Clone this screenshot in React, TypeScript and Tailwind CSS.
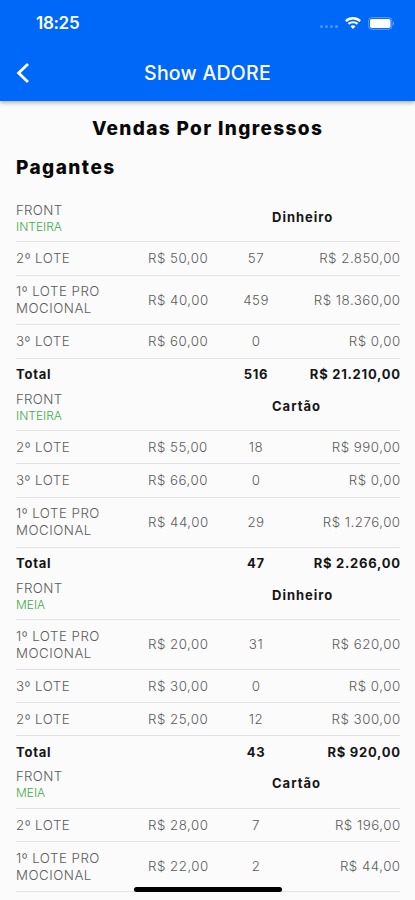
type Row = { lines: string[]; price: string; qty: string; amount: string };
type Section = {
  kind: string;
  method: string;
  rows: Row[];
  total?: { qty: string; amount: string };
};

const promo = ['1º LOTE PRO', 'MOCIONAL'];
const second = ['2º LOTE'];
const third = ['3º LOTE'];

const sections: Section[] = [
  {
    kind: 'INTEIRA',
    method: 'Dinheiro',
    rows: [
      { lines: second, price: 'R$ 50,00', qty: '57', amount: 'R$ 2.850,00' },
      { lines: promo, price: 'R$ 40,00', qty: '459', amount: 'R$ 18.360,00' },
      { lines: third, price: 'R$ 60,00', qty: '0', amount: 'R$ 0,00' },
    ],
    total: { qty: '516', amount: 'R$ 21.210,00' },
  },
  {
    kind: 'INTEIRA',
    method: 'Cartão',
    rows: [
      { lines: second, price: 'R$ 55,00', qty: '18', amount: 'R$ 990,00' },
      { lines: third, price: 'R$ 66,00', qty: '0', amount: 'R$ 0,00' },
      { lines: promo, price: 'R$ 44,00', qty: '29', amount: 'R$ 1.276,00' },
    ],
    total: { qty: '47', amount: 'R$ 2.266,00' },
  },
  {
    kind: 'MEIA',
    method: 'Dinheiro',
    rows: [
      { lines: promo, price: 'R$ 20,00', qty: '31', amount: 'R$ 620,00' },
      { lines: third, price: 'R$ 30,00', qty: '0', amount: 'R$ 0,00' },
      { lines: second, price: 'R$ 25,00', qty: '12', amount: 'R$ 300,00' },
    ],
    total: { qty: '43', amount: 'R$ 920,00' },
  },
  {
    kind: 'MEIA',
    method: 'Cartão',
    rows: [
      { lines: second, price: 'R$ 28,00', qty: '7', amount: 'R$ 196,00' },
      { lines: promo, price: 'R$ 22,00', qty: '2', amount: 'R$ 44,00' },
    ],
  },
];

function StatusBar() {
  return (
    <div className="flex h-[46px] items-center justify-between pr-[20px] pl-9">
      <span className="pt-0.5 text-[17px] font-semibold tracking-[-0.3px]">18:25</span>
      <div className="flex items-center">
        <div className="mt-[7px] mr-[7px] flex gap-[2px] opacity-30">
          <i className="size-[3px] rounded-full bg-white" />
          <i className="size-[3px] rounded-full bg-white" />
          <i className="size-[3px] rounded-full bg-white" />
          <i className="size-[3px] rounded-full bg-white" />
        </div>
        <svg width="16" height="12" viewBox="0 0 16 12" fill="none" stroke="white" className="mr-[7px]">
          <path d="M0.8 4.1C4.8 0.3 11.2 0.3 15.2 4.1" strokeWidth="2.4" />
          <path d="M3.4 6.9C6 4.6 10 4.6 12.6 6.9" strokeWidth="2.1" />
          <path d="M8 12L5.5 9.3C6.9 8 9.1 8 10.5 9.3Z" fill="white" stroke="none" />
        </svg>
        <svg width="27" height="13" viewBox="0 0 27 13">
          <rect x="0.6" y="0.6" width="23.3" height="11.8" rx="3.4" fill="none" stroke="white" strokeOpacity="0.35" />
          <rect x="2" y="2" width="20.5" height="9" rx="1.8" fill="white" />
          <path d="M25 4.5Q27 6.5 25 8.5Z" fill="white" fillOpacity="0.5" />
        </svg>
      </div>
    </div>
  );
}

function TicketRow({ row }: { row: Row }) {
  return (
    <div
      className={`grid grid-cols-[132px_76px_64px_112px] items-center border-t border-[#e3e3e3] ${
        row.lines.length > 1 ? 'h-[49.9px]' : 'h-[33.2px]'
      }`}
    >
      <div className="leading-[17px]">
        {row.lines.map((line) => (
          <div key={line}>{line}</div>
        ))}
      </div>
      <span className="leading-[17px]">{row.price}</span>
      <span className="text-center leading-[17px]">{row.qty}</span>
      <span className="-mr-[0.6px] text-right leading-[17px] whitespace-nowrap">{row.amount}</span>
    </div>
  );
}

export default function App() {
  return (
    <div className="relative h-[900px] w-[415px] overflow-hidden bg-[#fbfbfb] font-['Inter',sans-serif]">
      <header className="h-[100.5px] bg-[#0068f8] text-white shadow-[0_1px_5px_rgba(0,0,0,0.4)]">
        <StatusBar />
        <div className="grid h-[54px] grid-cols-[60px_1fr_60px] items-center">
          <svg width="14" height="22" viewBox="0 0 14 22" fill="none" stroke="white" strokeWidth="2.8" className="ml-[15.5px]">
            <path d="M12 2L2.6 11L12 20" />
          </svg>
          <h1 className="pt-px text-center text-[19.5px] font-medium tracking-[0.25px]">Show ADORE</h1>
        </div>
      </header>

      <main className="px-4">
        <h2 className="pt-[16px] text-center text-[19px] leading-6 font-extrabold tracking-[1.35px] text-[#080808]">
          Vendas Por Ingressos
        </h2>
        <h2 className="mt-[15px] text-[19px] leading-6 font-extrabold tracking-[1.45px] text-[#080808]">Pagantes</h2>

        <div className="mt-[22.3px] w-96 text-[13.3px] font-[350] tracking-[0.5px] text-[#5c5c5c]">
          {sections.map((section) => (
            <section key={section.kind + section.method}>
              <div className="grid h-[39.6px] grid-cols-[256px_1fr]">
                <div>
                  <div className="leading-[17px] tracking-[0.3px]">FRONT</div>
                  <div className="text-[12px] leading-[15px] tracking-[0px] text-[#43aa4a]">{section.kind}</div>
                </div>
                <span className="pt-[7px] text-[13px] leading-[17px] font-bold tracking-[1px] text-[#161616]">{section.method}</span>
              </div>
              {section.rows.map((row) => (
                <TicketRow key={row.price} row={row} />
              ))}
              {section.total ? (
                <div className="grid h-[33px] grid-cols-[208px_64px_112px] items-center border-t border-[#e3e3e3] text-[13px] leading-[17px] font-bold tracking-[0.75px] text-[#161616]">
                  <span>Total</span>
                  <span className="text-center">{section.total.qty}</span>
                  <span className="-mr-[0.8px] text-right whitespace-nowrap">{section.total.amount}</span>
                </div>
              ) : (
                <div className="border-t border-[#e3e3e3]" />
              )}
            </section>
          ))}
        </div>
      </main>
      <div className="absolute top-[887px] left-[134px] h-[5px] w-[148px] rounded-full bg-black" />
    </div>
  );
}
